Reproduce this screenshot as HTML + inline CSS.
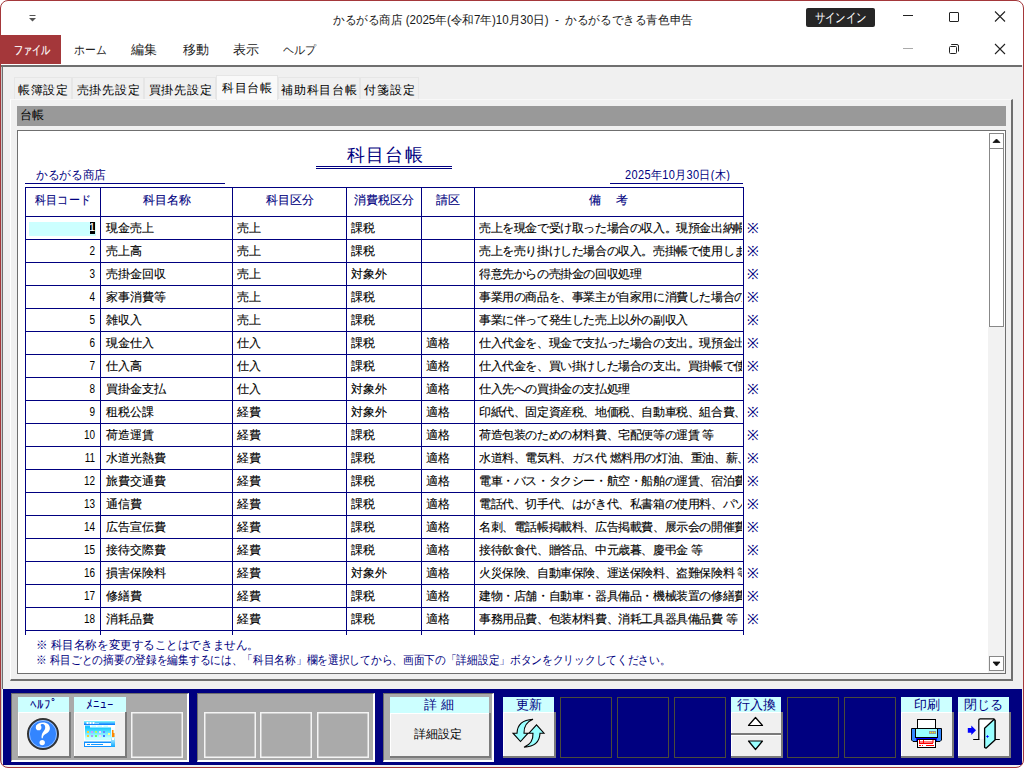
<!DOCTYPE html>
<html><head><meta charset="utf-8">
<style>
*{box-sizing:border-box;margin:0;padding:0}
html,body{width:1024px;height:768px;overflow:hidden;background:#fff}
body{position:relative;font-family:"Liberation Sans",sans-serif;font-size:12px;color:#000}
.a{position:absolute}
.t{position:absolute;white-space:nowrap;line-height:1}
#win{position:absolute;left:0;top:0;width:1024px;height:768px;border-radius:8px;overflow:hidden;background:#fff}
#frame{position:absolute;left:0;top:0;width:1024px;height:768px;border:1px solid #a4373a;border-radius:8px}
/* title */
.menu{position:absolute;top:44px;font-size:11.6px;color:#222}
/* content */
#content{position:absolute;left:1px;top:65px;width:1022px;height:703px;background:#f0f0f0}
.tab{position:absolute;top:77px;height:22px;background:#f0f0f0;border:1px solid #e6e6e6;border-bottom:none;font-size:12px;letter-spacing:0.8px;padding-left:1px;color:#000;text-align:center;line-height:25px}
.tab.sel{top:75px;height:25px;background:#f9f9f9;line-height:24px}
/* table */
.hl{position:absolute;height:1px;background:#000080}
.vl{position:absolute;width:1px;background:#000080}
.cell{position:absolute;white-space:nowrap;line-height:1;font-size:12px;-webkit-text-stroke:0.12px currentColor}
.nv{color:#000080}
/* toolbar */
#tb{position:absolute;left:3px;top:689px;width:1019px;height:76px;background:#000080}
.panel{position:absolute;top:693px;height:69px;background:#aaaaaa;border-top:1px solid #6e6e6e;border-left:1px solid #6e6e6e;border-right:2px solid #fff;border-bottom:2px solid #fff}
.slotw{position:absolute;top:712px;width:52px;height:46px;border:1px solid #f4f4f4;box-shadow:inset 0 0 0 0.5px #f4f4f4}
.slotd{position:absolute;top:697px;width:52px;height:61px;border:1px solid #4a4a3a}
.lbl{position:absolute;top:697px;width:51px;height:16px;background:#ccffff;color:#000080;text-align:center;font-size:13px;line-height:15px}
.btn{position:absolute;top:712px;width:53px;height:46px;background:#f0f0f0;border-right:2px solid #7a7a7a;border-bottom:2px solid #7a7a7a;box-shadow:inset 1px 1px 0 #fff}
</style></head><body>
<div id="win">
  <!-- title bar -->
  <svg class="a" style="left:28px;top:14px" width="9" height="9"><path d="M1.5 1.5h6" stroke="#555" stroke-width="1"/><path d="M1 4h7L4.5 7.5z" fill="#555"/></svg>
  <div class="t" style="left:333px;top:14px;font-size:12px;color:#1a1a1a;transform:scaleX(0.965);transform-origin:0 0">かるがる商店 (2025年(令和7年)10月30日)&nbsp; -&nbsp; かるがるできる青色申告</div>
  <div class="a" style="left:806px;top:8px;width:69px;height:19px;background:#262626;border-radius:2px"></div>
  <div class="t" style="left:806px;top:11px;width:69px;text-align:center;color:#fff;font-size:13px;transform:scaleX(0.8);transform-origin:34.5px 0">サインイン</div>
  <div class="a" style="left:903px;top:15px;width:10px;height:1px;background:#222"></div>
  <div class="a" style="left:949px;top:12px;width:10px;height:10px;border:1px solid #222;border-radius:1px"></div>
  <svg class="a" style="left:994px;top:10px" width="12" height="12"><path d="M1 1.5L11 11.5M11 1.5L1 11.5" stroke="#222" stroke-width="1.1"/></svg>
  <!-- menu bar -->
  <div class="a" style="left:0;top:35px;width:61px;height:29px;background:#a4373a"></div>
  <div class="t" style="left:14px;top:44px;font-size:12px;color:#fff;-webkit-text-stroke:0.2px #fff;transform:scaleX(0.76);transform-origin:0 0">ファイル</div>
  <div class="t menu" style="left:74px;font-size:12px;transform:scaleX(0.9);transform-origin:0 0">ホーム</div>
  <div class="t menu" style="left:131px;font-size:13px;top:43px">編集</div>
  <div class="t menu" style="left:183px;font-size:13px;top:43px">移動</div>
  <div class="t menu" style="left:233px;font-size:13px;top:43px">表示</div>
  <div class="t menu" style="left:283px;font-size:12px;transform:scaleX(0.92);transform-origin:0 0">ヘルプ</div>
  <div class="a" style="left:903px;top:48px;width:10px;height:1px;background:#aaa"></div>
  <svg class="a" style="left:948px;top:43px" width="12" height="12"><rect x="1.5" y="3.5" width="7" height="7" rx="1" fill="none" stroke="#222" stroke-width="1"/><path d="M3.2 1.5H9Q10.5 1.5 10.5 3V8.5" fill="none" stroke="#222" stroke-width="1"/></svg>
  <svg class="a" style="left:994px;top:43px" width="12" height="12"><path d="M1 1L11 11M11 1L1 11" stroke="#222" stroke-width="1.1"/></svg>

  <!-- content -->
  <div id="content"></div>
  <div class="a" style="left:1px;top:65px;width:1021px;height:2px;background:#6f6f6f"></div>
  <div class="a" style="left:2px;top:65px;width:1px;height:624px;background:#6f6f6f"></div>
  <div class="a" style="left:1px;top:67px;width:1px;height:700px;background:#c8c8c8"></div>

  <!-- tabs -->
  <div class="a" style="left:10px;top:99px;width:1003px;height:582px;background:#f0f0f0;border-left:1px solid #fff;border-top:1px solid #f8f8f8;border-right:2px solid #6f6f6f;border-bottom:2px solid #6f6f6f"></div>
  <div class="tab" style="left:14px;width:58px">帳簿設定</div>
  <div class="tab" style="left:72px;width:72px">売掛先設定</div>
  <div class="tab" style="left:144px;width:72px">買掛先設定</div>
  <div class="tab sel" style="left:216px;width:62px">科目台帳</div>
  <div class="tab" style="left:278px;width:82px">補助科目台帳</div>
  <div class="tab" style="left:360px;width:59px">付箋設定</div>

  <!-- header -->
  <div class="a" style="left:17px;top:106px;width:989px;height:20px;background:#999999"></div>
  <div class="t" style="left:20px;top:109px;font-size:12px">台帳</div>

  <!-- form -->
  <div class="a" style="left:17px;top:130px;width:989px;height:544px;background:#fff;border:1px solid #6f6f6f"></div>
  <div class="a" style="left:988px;top:327px;width:17px;height:346px;background:#f2f2f2"></div>
  <div class="a" style="left:989px;top:133px;width:15px;height:16px;background:#fff;border:1px solid #888"></div>
  <div class="a" style="left:989px;top:148px;width:15px;height:179px;background:#fff;border:1px solid #888"></div>
  <div class="a" style="left:989px;top:656px;width:15px;height:15px;background:#fff;border:1px solid #888"></div>
  <svg class="a" style="left:992px;top:137px" width="10" height="8"><path d="M1 5.5L4.5 2L8 5.5Z" fill="#111" stroke="#111" stroke-width="0.8"/></svg>
  <svg class="a" style="left:992px;top:660px" width="10" height="8"><path d="M1 2L8 2L4.5 6Z" fill="#111" stroke="#111" stroke-width="0.8"/></svg>

  <div class="t nv" style="left:347px;top:146px;font-size:18px;letter-spacing:1.2px">科目台帳</div>
<div class="hl" style="left:316px;top:166px;width:136px"></div>
<div class="hl" style="left:316px;top:168px;width:136px"></div>
<div class="t nv" style="left:36px;top:169px;font-size:12px;transform:scaleX(0.97);transform-origin:0 0">かるがる商店</div>
<div class="hl" style="left:25px;top:183px;width:200px"></div>
<div class="t nv" style="left:625px;top:169px;font-size:11px;letter-spacing:0.35px;transform:scaleY(1.08);transform-origin:0 0">2025年10月30日(木)</div>
<div class="hl" style="left:610px;top:183px;width:133px"></div>
<div class="hl" style="left:25px;top:187px;width:719px"></div>
<div class="hl" style="left:25px;top:216px;width:719px"></div>
<div class="hl" style="left:25px;top:239px;width:719px"></div>
<div class="hl" style="left:25px;top:262px;width:719px"></div>
<div class="hl" style="left:25px;top:285px;width:719px"></div>
<div class="hl" style="left:25px;top:308px;width:719px"></div>
<div class="hl" style="left:25px;top:331px;width:719px"></div>
<div class="hl" style="left:25px;top:354px;width:719px"></div>
<div class="hl" style="left:25px;top:377px;width:719px"></div>
<div class="hl" style="left:25px;top:400px;width:719px"></div>
<div class="hl" style="left:25px;top:423px;width:719px"></div>
<div class="hl" style="left:25px;top:446px;width:719px"></div>
<div class="hl" style="left:25px;top:469px;width:719px"></div>
<div class="hl" style="left:25px;top:492px;width:719px"></div>
<div class="hl" style="left:25px;top:515px;width:719px"></div>
<div class="hl" style="left:25px;top:538px;width:719px"></div>
<div class="hl" style="left:25px;top:561px;width:719px"></div>
<div class="hl" style="left:25px;top:584px;width:719px"></div>
<div class="hl" style="left:25px;top:607px;width:719px"></div>
<div class="hl" style="left:25px;top:630px;width:719px"></div>
<div class="vl" style="left:25px;top:187px;height:448px"></div>
<div class="vl" style="left:100px;top:187px;height:448px"></div>
<div class="vl" style="left:232px;top:187px;height:448px"></div>
<div class="vl" style="left:346px;top:187px;height:448px"></div>
<div class="vl" style="left:421px;top:187px;height:448px"></div>
<div class="vl" style="left:474px;top:187px;height:448px"></div>
<div class="vl" style="left:743px;top:187px;height:448px"></div>
<div class="cell nv" style="left:589px;top:194px">備</div>
<div class="cell nv" style="left:616px;top:194px">考</div>
<div class="cell nv" style="left:26px;top:194px;width:74px;text-align:center;transform:scaleX(0.92)">科目コード</div>
<div class="cell nv" style="left:101px;top:194px;width:131px;text-align:center">科目名称</div>
<div class="cell nv" style="left:233px;top:194px;width:113px;text-align:center">科目区分</div>
<div class="cell nv" style="left:347px;top:194px;width:74px;text-align:center">消費税区分</div>
<div class="cell nv" style="left:422px;top:194px;width:52px;text-align:center">請区</div>
<div class="cell nv" style="left:475px;top:194px;width:268px;text-align:center"></div>
<div class="a" style="left:29px;top:222px;width:67px;height:14px;background:#ccffff"></div>
<div class="a" style="left:90px;top:222px;width:5px;height:12px;background:#000"></div>
<div class="cell" style="left:87px;top:222px;width:8px;text-align:right;color:#fff;font-size:11px">1</div>
<div class="cell" style="left:106px;top:222px">現金売上</div>
<div class="cell" style="left:237px;top:222px">売上</div>
<div class="cell" style="left:351px;top:222px">課税</div>
<div class="cell" style="left:479px;top:222px;width:263px;overflow:hidden;letter-spacing:-0.4px">売上を現金で受け取った場合の収入。現預金出納帳</div>
<div class="cell nv" style="left:747px;top:221px;font-size:14px;-webkit-text-stroke:0">※</div>
<div class="cell" style="left:40px;top:245px;width:55px;text-align:right;transform:scaleX(0.83);transform-origin:100% 0;-webkit-text-stroke:0">2</div>
<div class="cell" style="left:106px;top:245px">売上高</div>
<div class="cell" style="left:237px;top:245px">売上</div>
<div class="cell" style="left:351px;top:245px">課税</div>
<div class="cell" style="left:479px;top:245px;width:263px;overflow:hidden;letter-spacing:-0.4px">売上を売り掛けした場合の収入。売掛帳で使用します</div>
<div class="cell nv" style="left:747px;top:244px;font-size:14px;-webkit-text-stroke:0">※</div>
<div class="cell" style="left:40px;top:268px;width:55px;text-align:right;transform:scaleX(0.83);transform-origin:100% 0;-webkit-text-stroke:0">3</div>
<div class="cell" style="left:106px;top:268px">売掛金回収</div>
<div class="cell" style="left:237px;top:268px">売上</div>
<div class="cell" style="left:351px;top:268px">対象外</div>
<div class="cell" style="left:479px;top:268px;width:263px;overflow:hidden;letter-spacing:-0.4px">得意先からの売掛金の回収処理</div>
<div class="cell nv" style="left:747px;top:267px;font-size:14px;-webkit-text-stroke:0">※</div>
<div class="cell" style="left:40px;top:291px;width:55px;text-align:right;transform:scaleX(0.83);transform-origin:100% 0;-webkit-text-stroke:0">4</div>
<div class="cell" style="left:106px;top:291px">家事消費等</div>
<div class="cell" style="left:237px;top:291px">売上</div>
<div class="cell" style="left:351px;top:291px">課税</div>
<div class="cell" style="left:479px;top:291px;width:263px;overflow:hidden;letter-spacing:-0.4px">事業用の商品を、事業主が自家用に消費した場合の</div>
<div class="cell nv" style="left:747px;top:290px;font-size:14px;-webkit-text-stroke:0">※</div>
<div class="cell" style="left:40px;top:314px;width:55px;text-align:right;transform:scaleX(0.83);transform-origin:100% 0;-webkit-text-stroke:0">5</div>
<div class="cell" style="left:106px;top:314px">雑収入</div>
<div class="cell" style="left:237px;top:314px">売上</div>
<div class="cell" style="left:351px;top:314px">課税</div>
<div class="cell" style="left:479px;top:314px;width:263px;overflow:hidden;letter-spacing:-0.4px">事業に伴って発生した売上以外の副収入</div>
<div class="cell nv" style="left:747px;top:313px;font-size:14px;-webkit-text-stroke:0">※</div>
<div class="cell" style="left:40px;top:337px;width:55px;text-align:right;transform:scaleX(0.83);transform-origin:100% 0;-webkit-text-stroke:0">6</div>
<div class="cell" style="left:106px;top:337px">現金仕入</div>
<div class="cell" style="left:237px;top:337px">仕入</div>
<div class="cell" style="left:351px;top:337px">課税</div>
<div class="cell" style="left:426px;top:337px">適格</div>
<div class="cell" style="left:479px;top:337px;width:263px;overflow:hidden;letter-spacing:-0.4px">仕入代金を、現金で支払った場合の支出。現預金出</div>
<div class="cell nv" style="left:747px;top:336px;font-size:14px;-webkit-text-stroke:0">※</div>
<div class="cell" style="left:40px;top:360px;width:55px;text-align:right;transform:scaleX(0.83);transform-origin:100% 0;-webkit-text-stroke:0">7</div>
<div class="cell" style="left:106px;top:360px">仕入高</div>
<div class="cell" style="left:237px;top:360px">仕入</div>
<div class="cell" style="left:351px;top:360px">課税</div>
<div class="cell" style="left:426px;top:360px">適格</div>
<div class="cell" style="left:479px;top:360px;width:263px;overflow:hidden;letter-spacing:-0.4px">仕入代金を、買い掛けした場合の支出。買掛帳で使</div>
<div class="cell nv" style="left:747px;top:359px;font-size:14px;-webkit-text-stroke:0">※</div>
<div class="cell" style="left:40px;top:383px;width:55px;text-align:right;transform:scaleX(0.83);transform-origin:100% 0;-webkit-text-stroke:0">8</div>
<div class="cell" style="left:106px;top:383px">買掛金支払</div>
<div class="cell" style="left:237px;top:383px">仕入</div>
<div class="cell" style="left:351px;top:383px">対象外</div>
<div class="cell" style="left:426px;top:383px">適格</div>
<div class="cell" style="left:479px;top:383px;width:263px;overflow:hidden;letter-spacing:-0.4px">仕入先への買掛金の支払処理</div>
<div class="cell nv" style="left:747px;top:382px;font-size:14px;-webkit-text-stroke:0">※</div>
<div class="cell" style="left:40px;top:406px;width:55px;text-align:right;transform:scaleX(0.83);transform-origin:100% 0;-webkit-text-stroke:0">9</div>
<div class="cell" style="left:106px;top:406px">租税公課</div>
<div class="cell" style="left:237px;top:406px">経費</div>
<div class="cell" style="left:351px;top:406px">対象外</div>
<div class="cell" style="left:426px;top:406px">適格</div>
<div class="cell" style="left:479px;top:406px;width:263px;overflow:hidden;letter-spacing:-0.4px">印紙代、固定資産税、地価税、自動車税、組合費、等</div>
<div class="cell nv" style="left:747px;top:405px;font-size:14px;-webkit-text-stroke:0">※</div>
<div class="cell" style="left:40px;top:429px;width:55px;text-align:right;transform:scaleX(0.83);transform-origin:100% 0;-webkit-text-stroke:0">10</div>
<div class="cell" style="left:106px;top:429px">荷造運賃</div>
<div class="cell" style="left:237px;top:429px">経費</div>
<div class="cell" style="left:351px;top:429px">課税</div>
<div class="cell" style="left:426px;top:429px">適格</div>
<div class="cell" style="left:479px;top:429px;width:263px;overflow:hidden;letter-spacing:-0.4px">荷造包装のための材料費、宅配便等の運賃 等</div>
<div class="cell nv" style="left:747px;top:428px;font-size:14px;-webkit-text-stroke:0">※</div>
<div class="cell" style="left:40px;top:452px;width:55px;text-align:right;transform:scaleX(0.83);transform-origin:100% 0;-webkit-text-stroke:0">11</div>
<div class="cell" style="left:106px;top:452px">水道光熱費</div>
<div class="cell" style="left:237px;top:452px">経費</div>
<div class="cell" style="left:351px;top:452px">課税</div>
<div class="cell" style="left:426px;top:452px">適格</div>
<div class="cell" style="left:479px;top:452px;width:263px;overflow:hidden;letter-spacing:-0.4px">水道料、電気料、ガス代 燃料用の灯油、重油、薪、</div>
<div class="cell nv" style="left:747px;top:451px;font-size:14px;-webkit-text-stroke:0">※</div>
<div class="cell" style="left:40px;top:475px;width:55px;text-align:right;transform:scaleX(0.83);transform-origin:100% 0;-webkit-text-stroke:0">12</div>
<div class="cell" style="left:106px;top:475px">旅費交通費</div>
<div class="cell" style="left:237px;top:475px">経費</div>
<div class="cell" style="left:351px;top:475px">課税</div>
<div class="cell" style="left:426px;top:475px">適格</div>
<div class="cell" style="left:479px;top:475px;width:263px;overflow:hidden;letter-spacing:-0.4px">電車・バス・タクシー・航空・船舶の運賃、宿泊費、駐</div>
<div class="cell nv" style="left:747px;top:474px;font-size:14px;-webkit-text-stroke:0">※</div>
<div class="cell" style="left:40px;top:498px;width:55px;text-align:right;transform:scaleX(0.83);transform-origin:100% 0;-webkit-text-stroke:0">13</div>
<div class="cell" style="left:106px;top:498px">通信費</div>
<div class="cell" style="left:237px;top:498px">経費</div>
<div class="cell" style="left:351px;top:498px">課税</div>
<div class="cell" style="left:426px;top:498px">適格</div>
<div class="cell" style="left:479px;top:498px;width:263px;overflow:hidden;letter-spacing:-0.4px">電話代、切手代、はがき代、私書箱の使用料、パソコン</div>
<div class="cell nv" style="left:747px;top:497px;font-size:14px;-webkit-text-stroke:0">※</div>
<div class="cell" style="left:40px;top:521px;width:55px;text-align:right;transform:scaleX(0.83);transform-origin:100% 0;-webkit-text-stroke:0">14</div>
<div class="cell" style="left:106px;top:521px">広告宣伝費</div>
<div class="cell" style="left:237px;top:521px">経費</div>
<div class="cell" style="left:351px;top:521px">課税</div>
<div class="cell" style="left:426px;top:521px">適格</div>
<div class="cell" style="left:479px;top:521px;width:263px;overflow:hidden;letter-spacing:-0.4px">名刺、電話帳掲載料、広告掲載費、展示会の開催費</div>
<div class="cell nv" style="left:747px;top:520px;font-size:14px;-webkit-text-stroke:0">※</div>
<div class="cell" style="left:40px;top:544px;width:55px;text-align:right;transform:scaleX(0.83);transform-origin:100% 0;-webkit-text-stroke:0">15</div>
<div class="cell" style="left:106px;top:544px">接待交際費</div>
<div class="cell" style="left:237px;top:544px">経費</div>
<div class="cell" style="left:351px;top:544px">課税</div>
<div class="cell" style="left:426px;top:544px">適格</div>
<div class="cell" style="left:479px;top:544px;width:263px;overflow:hidden;letter-spacing:-0.4px">接待飲食代、贈答品、中元歳暮、慶弔金 等</div>
<div class="cell nv" style="left:747px;top:543px;font-size:14px;-webkit-text-stroke:0">※</div>
<div class="cell" style="left:40px;top:567px;width:55px;text-align:right;transform:scaleX(0.83);transform-origin:100% 0;-webkit-text-stroke:0">16</div>
<div class="cell" style="left:106px;top:567px">損害保険料</div>
<div class="cell" style="left:237px;top:567px">経費</div>
<div class="cell" style="left:351px;top:567px">対象外</div>
<div class="cell" style="left:426px;top:567px">適格</div>
<div class="cell" style="left:479px;top:567px;width:263px;overflow:hidden;letter-spacing:-0.4px">火災保険、自動車保険、運送保険料、盗難保険料 等</div>
<div class="cell nv" style="left:747px;top:566px;font-size:14px;-webkit-text-stroke:0">※</div>
<div class="cell" style="left:40px;top:590px;width:55px;text-align:right;transform:scaleX(0.83);transform-origin:100% 0;-webkit-text-stroke:0">17</div>
<div class="cell" style="left:106px;top:590px">修繕費</div>
<div class="cell" style="left:237px;top:590px">経費</div>
<div class="cell" style="left:351px;top:590px">課税</div>
<div class="cell" style="left:426px;top:590px">適格</div>
<div class="cell" style="left:479px;top:590px;width:263px;overflow:hidden;letter-spacing:-0.4px">建物・店舗・自動車・器具備品・機械装置の修繕費 等</div>
<div class="cell nv" style="left:747px;top:589px;font-size:14px;-webkit-text-stroke:0">※</div>
<div class="cell" style="left:40px;top:613px;width:55px;text-align:right;transform:scaleX(0.83);transform-origin:100% 0;-webkit-text-stroke:0">18</div>
<div class="cell" style="left:106px;top:613px">消耗品費</div>
<div class="cell" style="left:237px;top:613px">経費</div>
<div class="cell" style="left:351px;top:613px">課税</div>
<div class="cell" style="left:426px;top:613px">適格</div>
<div class="cell" style="left:479px;top:613px;width:263px;overflow:hidden;letter-spacing:-0.4px">事務用品費、包装材料費、消耗工具器具備品費 等</div>
<div class="cell nv" style="left:747px;top:612px;font-size:14px;-webkit-text-stroke:0">※</div>
<div class="t nv" style="left:36px;top:639px;font-size:12px;transform:scaleX(0.963);transform-origin:0 0">※ 科目名称を変更することはできません。</div>
<div class="t nv" style="left:36px;top:654px;font-size:12px;transform:scaleX(0.892);transform-origin:0 0">※ 科目ごとの摘要の登録を編集するには、「科目名称」欄を選択してから、画面下の「詳細設定」ボタンをクリックしてください。</div>

  <!-- toolbar -->
<div id="tb"></div>
<div class="panel" style="left:11px;width:178px"></div>
<div class="panel" style="left:197px;width:178px"></div>
<div class="panel" style="left:383px;width:111px"></div>
<div class="slotw" style="left:131px"></div>
<div class="slotw" style="left:204px"></div>
<div class="slotw" style="left:260px"></div>
<div class="slotw" style="left:317px"></div>
<div class="slotd" style="left:560px"></div>
<div class="slotd" style="left:617px"></div>
<div class="slotd" style="left:674px"></div>
<div class="slotd" style="left:787px"></div>
<div class="slotd" style="left:844px"></div>
<div class="lbl" style="left:18px;width:51px">ﾍﾙﾌﾟ</div>
<div class="lbl" style="left:74px;width:52px">ﾒﾆｭｰ</div>
<div class="lbl" style="left:503px;width:51px">更新</div>
<div class="lbl" style="left:731px;width:50px">行入換</div>
<div class="lbl" style="left:901px;width:51px">印刷</div>
<div class="lbl" style="left:958px;width:51px">閉じる</div>
<div class="btn" style="left:18px"></div>
<div class="btn" style="left:74px"></div>
<div class="btn" style="left:503px"></div>
<div class="btn" style="left:901px"></div>
<div class="btn" style="left:958px"></div>
<div class="lbl" style="left:390px;width:99px;letter-spacing:4px;padding-left:2px">詳細</div>
<div class="btn" style="left:390px;width:101px;top:713px;height:45px"></div>
<div class="t" style="left:388px;top:728px;width:99px;text-align:center;font-size:12px">詳細設定</div>
<div class="btn" style="left:731px;top:712px;width:52px;height:23px"></div>
<div class="btn" style="left:731px;top:735px;width:52px;height:23px"></div>
<svg class="a" style="left:731px;top:712px" width="52" height="46"><path d="M748.5 725.5L755.5 717.5L762.5 725.5Z" transform="translate(-731,-712)" fill="#fff" stroke="#000" stroke-width="1.2" stroke-linejoin="round"/><path d="M748.5 741L762.5 741L755.5 749.5Z" transform="translate(-731,-712)" fill="#99ffff" stroke="#000" stroke-width="1.2" stroke-linejoin="round"/></svg>
<svg class="a" style="left:26px;top:717px" width="34" height="34"><circle cx="17" cy="17" r="15" fill="#3385ff" stroke="#333" stroke-width="2"/><circle cx="17" cy="17" r="13.6" fill="none" stroke="#fff" stroke-width="0.8" opacity="0.6"/><g fill="#fff"><circle cx="12.6" cy="10.4" r="2.8"/><circle cx="16.2" cy="25.6" r="2.7"/><path d="M10 9.5C10.8 6.8 13.6 5.6 17 5.6C21.5 5.6 23.9 8 23.9 11.2C23.9 14.6 20.8 16.2 18.8 17.6C17.3 18.8 16.9 19.8 16.8 21.2L15.6 21.2C15.4 18.6 15.9 16.6 17.1 15C18.4 13.2 19.2 12 19.2 10.4C19.2 8.2 18.2 6.9 16.6 6.9C15.2 6.9 14.5 7.5 14.2 8.5Z"/></g></svg>
<svg class="a" style="left:84px;top:720px" width="31" height="27">
<defs><linearGradient id="gm" x1="0" y1="0" x2="0" y2="1"><stop offset="0" stop-color="#10c8ff"/><stop offset="0.7" stop-color="#b8ffff"/><stop offset="1" stop-color="#ffffff"/></linearGradient>
<linearGradient id="gt" x1="0" y1="0" x2="0" y2="1"><stop offset="0" stop-color="#88ffff"/><stop offset="1" stop-color="#0070ff"/></linearGradient>
<linearGradient id="gr" x1="0" y1="0" x2="0" y2="1"><stop offset="0" stop-color="#ffffff"/><stop offset="0.5" stop-color="#ccf8ff"/><stop offset="1" stop-color="#10a8ff"/></linearGradient></defs>
<rect x="0" y="0" width="31" height="27" fill="#fff"/>
<rect x="0" y="1" width="31" height="4" fill="url(#gt)"/>
<g fill="#fff"><rect x="2.5" y="2" width="2" height="2"/><rect x="5.5" y="2" width="2" height="2"/><rect x="8.5" y="2" width="2" height="2"/><rect x="11.5" y="3" width="1" height="1"/><rect x="13.5" y="3" width="1" height="1"/></g>
<rect x="1" y="5.5" width="5" height="3" fill="#22c0ff"/>
<g fill="#c8ffff"><rect x="7.5" y="5.5" width="4.5" height="1.5"/><rect x="13.5" y="5.5" width="4.5" height="1.5"/><rect x="19.5" y="5.5" width="4.5" height="1.5"/></g>
<rect x="1" y="7.5" width="26" height="14" fill="url(#gm)"/>
<rect x="2" y="18" width="24" height="2" fill="#c8ffff"/>
<g><rect x="3" y="11" width="2" height="2" fill="#ffcc33"/><rect x="7" y="11" width="2" height="2" fill="#cc99ff"/><rect x="11" y="11" width="2" height="2" fill="#aaff66"/><rect x="15" y="11" width="2" height="2" fill="#ffccff"/><rect x="19" y="11" width="2" height="2" fill="#6688ff"/>
<rect x="3" y="15" width="2" height="2" fill="#ffcc33"/><rect x="7" y="15" width="2" height="2" fill="#aa99ff"/><rect x="11" y="15" width="2" height="2" fill="#66ff66"/><rect x="15" y="15" width="2" height="2" fill="#ffccff"/><rect x="19" y="15" width="2" height="2" fill="#4477ff"/><rect x="24" y="13" width="2" height="2" fill="#ffff88"/></g>
<rect x="27" y="7" width="4" height="20" fill="url(#gr)"/>
<rect x="28" y="10" width="1.5" height="7" fill="#ff8800"/><rect x="29" y="13" width="1.5" height="4" fill="#ff8800"/>
<rect x="28" y="18" width="2" height="2" fill="#fff"/>
<rect x="0" y="21.5" width="27" height="5.5" fill="#1090ff"/>
<rect x="1" y="23" width="26" height="3" fill="#fff"/>
<rect x="3" y="24" width="3" height="1" fill="#1a9aff"/><rect x="7" y="24" width="12" height="1" fill="#1a9aff"/>
</svg>
<svg class="a" style="left:507px;top:712px" width="44" height="44">
<path d="M6 21.2L10 21.2Q10.5 8 26 7.2Q16.5 11 17 21.2L21 21.2L13.5 29.5Z" fill="#99ffff" stroke="#000" stroke-width="1.1" stroke-linejoin="miter"/>
<path d="M37 21.2L33 21.2Q32.5 34.4 17 35.2Q26.5 31.4 26 21.2L22 21.2L29.5 12.9Z" fill="#99ffff" stroke="#000" stroke-width="1.1" stroke-linejoin="miter"/>
</svg>
<svg class="a" style="left:905px;top:712px" width="44" height="44">
<rect x="12.5" y="7.5" width="18" height="9" fill="#fff" stroke="#000" stroke-width="1"/>
<path d="M6.5 16.5H36.5V28L35 29.5H8L6.5 28Z" fill="#3388ff" stroke="#000" stroke-width="1"/>
<rect x="10.5" y="16.5" width="22" height="9" fill="#99ffff" stroke="#000" stroke-width="1"/>
<rect x="24" y="19" width="7" height="3" fill="#999"/>
<g fill="#ffee00"><rect x="25" y="20" width="1" height="1"/><rect x="27" y="20" width="1" height="1"/><rect x="29" y="20" width="1" height="1"/></g>
<rect x="11" y="26" width="21" height="3" fill="#0000ff"/>
<rect x="12.5" y="27.5" width="18" height="8" fill="#fff" stroke="#000" stroke-width="1"/>
<g fill="#ff0000"><rect x="14" y="28" width="1" height="3"/><rect x="14" y="29.5" width="14" height="1"/><rect x="14" y="31" width="14" height="1"/><rect x="18" y="28" width="1" height="3"/><rect x="27.5" y="28" width="1" height="3"/><rect x="14" y="33" width="2" height="1"/><rect x="17" y="33" width="1" height="1"/><rect x="21" y="33" width="8" height="1"/></g>
</svg>
<svg class="a" style="left:962px;top:712px" width="44" height="44">
<path d="M16.8 27V8.2Q16.8 6.8 18.3 6.8H31.5L33 8.2V27" fill="#fff" stroke="#000" stroke-width="1.2"/>
<path d="M11.2 27.5H17.5M33 27.5H37.8" stroke="#000" stroke-width="1.2"/>
<path d="M32.2 7.2L33 8.5V28L24 36.2L22.6 35.4V16.3Z" fill="#99ffff" stroke="#000" stroke-width="1.3" stroke-linejoin="round"/>
<path d="M5.8 16H9.3V13.6L14 18.3L9.3 23V20.8H5.8Z" fill="#0000ff"/>
<path d="M25.5 23.3V25.7M24.3 24.5H26.7" stroke="#0000ff" stroke-width="1"/>
</svg>
</div>
<div id="frame"></div>
</body></html>
